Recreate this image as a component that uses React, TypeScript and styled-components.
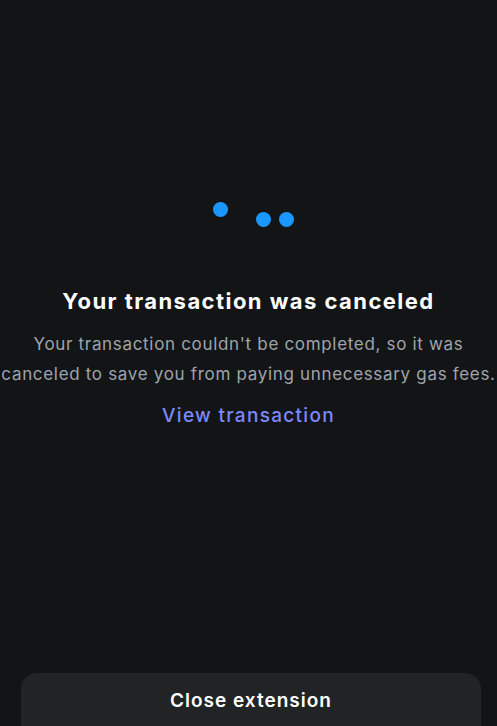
import styled, { createGlobalStyle } from "styled-components";

const GlobalStyle = createGlobalStyle`
  html, body {
    margin: 0;
    padding: 0;
    height: 100%;
    overflow: hidden;
    background: #131416;
  }
  body {
    font-family: Inter, "Noto Sans", "Liberation Sans", sans-serif;
    color: #ffffff;
  }
`;

const Page = styled.div`
  height: 745px;
  display: flex;
  flex-direction: column;
  background: #131416;
`;

const Main = styled.main`
  flex: 1;
  display: flex;
  flex-direction: column;
  align-items: center;
  padding-top: 212px;
`;

const Dots = styled.div`
  display: flex;
  gap: 8px;
  height: 15px;
`;

const Dot = styled.span<{ $x: number; $y: number }>`
  width: 15px;
  height: 15px;
  border-radius: 50%;
  background: #1a98ff;
  transform: translate(${(p) => p.$x}px, ${(p) => p.$y}px);
`;

const Title = styled.h2`
  margin: 60px 0 0;
  font-size: 22px;
  line-height: 28px;
  font-weight: 700;
  letter-spacing: 1.45px;
  white-space: nowrap;
  text-align: center;
`;

const Text = styled.p`
  margin: 14px 0 0;
  width: 497px;
  font-size: 17px;
  line-height: 30px;
  letter-spacing: 0.68px;
  color: #9ea4ac;
  text-align: center;
`;

const Link = styled.a`
  margin-top: 14px;
  font-size: 19px;
  line-height: 26px;
  font-weight: 500;
  letter-spacing: 1.3px;
  color: #7b88ff;
  text-decoration: none;
  cursor: pointer;
`;

const Footer = styled.footer`
  padding: 0 16px 0 21px;
`;

const Button = styled.button`
  width: 100%;
  height: 72px;
  border: none;
  border-radius: 16px;
  background: #222325;
  color: #ffffff;
  font-family: inherit;
  font-size: 19px;
  font-weight: 600;
  letter-spacing: 1px;
  padding: 0 0 18px;
  cursor: pointer;
`;

export default function App() {
  return (
    <Page>
      <GlobalStyle />
      <Main>
        <Dots>
          <Dot $x={-5} $y={-10} />
          <Dot $x={15} $y={0} />
          <Dot $x={15} $y={0} />
        </Dots>
        <Title>Your transaction was canceled</Title>
        <Text>
          Your transaction couldn't be completed, so it was canceled to save you from paying
          unnecessary gas fees.
        </Text>
        <Link>View transaction</Link>
      </Main>
      <Footer>
        <Button>Close extension</Button>
      </Footer>
    </Page>
  );
}
